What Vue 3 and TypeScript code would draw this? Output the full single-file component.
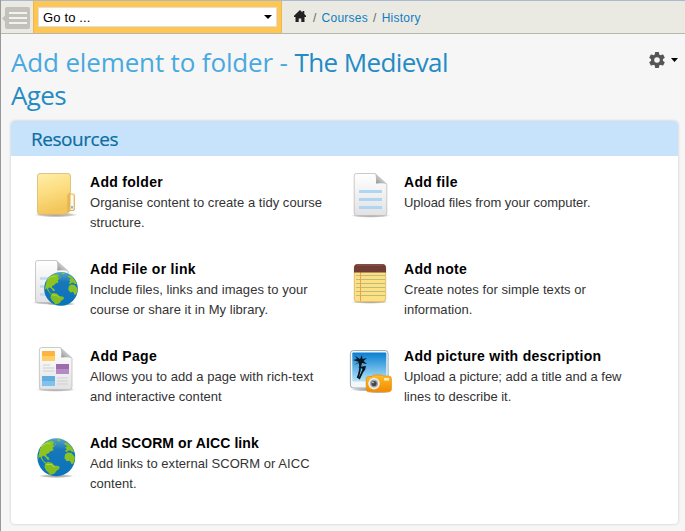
<script setup lang="ts">
interface Resource {
  icon: string
  title: string
  lines: string[]
}

const resources: Resource[] = [
  { icon: 'folder', title: 'Add folder', lines: ['Organise content to create a tidy course', 'structure.'] },
  { icon: 'file', title: 'Add file', lines: ['Upload files from your computer.'] },
  { icon: 'link', title: 'Add File or link', lines: ['Include files, links and images to your', 'course or share it in My library.'] },
  { icon: 'note', title: 'Add note', lines: ['Create notes for simple texts or', 'information.'] },
  { icon: 'page', title: 'Add Page', lines: ['Allows you to add a page with rich-text', 'and interactive content'] },
  { icon: 'picture', title: 'Add picture with description', lines: ['Upload a picture; add a title and a few', 'lines to describe it.'] },
  { icon: 'scorm', title: 'Add SCORM or AICC link', lines: ['Add links to external SCORM or AICC', 'content.'] },
]
</script>

<template>
  <div class="page">
    <!-- Shared gradients and shapes -->
    <svg class="defs" width="0" height="0" aria-hidden="true">
      <defs>
        <linearGradient id="g-folder" x1="0" y1="0" x2="0.25" y2="1">
          <stop offset="0" stop-color="#ffeeaa" />
          <stop offset="0.5" stop-color="#fcdd80" />
          <stop offset="1" stop-color="#f3c55a" />
        </linearGradient>
        <linearGradient id="g-paper" x1="0" y1="0" x2="0" y2="1">
          <stop offset="0" stop-color="#ffffff" />
          <stop offset="1" stop-color="#e2e2e4" />
        </linearGradient>
        <linearGradient id="g-fold" x1="0" y1="1" x2="1" y2="0">
          <stop offset="0" stop-color="#8b8b8b" />
          <stop offset="0.6" stop-color="#d5d5d5" />
          <stop offset="1" stop-color="#b5b5b5" />
        </linearGradient>
        <linearGradient id="g-sea" x1="0" y1="0" x2="0" y2="1">
          <stop offset="0" stop-color="#55a5c9" />
          <stop offset="0.3" stop-color="#1976ba" />
          <stop offset="1" stop-color="#0873bb" />
        </linearGradient>
        <linearGradient id="g-sky" x1="0" y1="0" x2="0" y2="1">
          <stop offset="0" stop-color="#087ed3" />
          <stop offset="1" stop-color="#b4e4f8" />
        </linearGradient>
        <linearGradient id="g-camera" x1="0" y1="0" x2="0" y2="1">
          <stop offset="0" stop-color="#ffbd29" />
          <stop offset="1" stop-color="#f38a00" />
        </linearGradient>
        <radialGradient id="g-shadow">
          <stop offset="0" stop-color="#777" stop-opacity="0.8" />
          <stop offset="0.7" stop-color="#888" stop-opacity="0.45" />
          <stop offset="1" stop-color="#999" stop-opacity="0" />
        </radialGradient>
        <symbol id="sheet" viewBox="0 0 48 48">
          <ellipse cx="23.5" cy="44.5" rx="20" ry="2.3" fill="url(#g-shadow)" />
          <path d="M9.5 2.5H28L39.8 13V42Q39.8 44.5 37.3 44.5H9.5Q7.2 44.5 7.2 42V5Q7.2 2.5 9.5 2.5Z" fill="url(#g-paper)" stroke="#bcbcbc" stroke-width="0.8" />
          <path d="M28 2.3L40 13.2Q36 11.5 29 12.5Q29.5 6 28 2.3Z" fill="url(#g-fold)" />
        </symbol>
        <symbol id="globe" viewBox="0 0 114 114">
          <circle cx="57" cy="57" r="56" fill="url(#g-sea)" />
          <path d="M6 45L9 32Q17 17 31 10L45 8L50 14L47 21L53 23L46 29L49 36L40 39L34 45L27 48L28 54L34 57L37 64L31 64L25 56L18 52L14 57L20 69L27 73L24 76L15 66L9 55L3 61Z" fill="#8cc51f" />
          <path d="M24 76L32 70L45 74L51 81L65 83L67 90L58 97L52 105L38 109L34 102L27 96L22 86Z" fill="#84bd22" />
          <path d="M61 3L70 5L66 10L59 8ZM78 16L87 13L97 21Q107 32 110 42L101 40L98 36L91 38L87 42L83 38L88 33L83 28L90 24ZM83 48L91 43L102 44L108 52L112 56Q112 65 107 76L102 77L97 67L88 69L81 60ZM51 16L57 18L54 21Z" fill="#89c225" />
          <path d="M12 26L20 19L31 15L39 17M27 78L42 78L52 86" fill="none" stroke="#b3d935" stroke-width="3" />
        </symbol>
      </defs>
    </svg>

    <header class="topbar">
      <button class="toggle" aria-label="Menu">
        <svg width="29" height="22" viewBox="0 0 29 22">
          <path d="M5 0H26Q28 0 28 2V20Q28 22 26 22H5Q3 22 3 20V14.5L0 11.5L3 8.5V2Q3 0 5 0Z" fill="#c2c1bc" />
          <path d="M7 6H25M7 11H25M7 16H25" stroke="#f3f2ed" stroke-width="2" />
        </svg>
      </button>
      <div class="goto">
        <div class="select" role="button" tabindex="0">
          <span>Go to ...</span>
          <svg width="8" height="4" viewBox="0 0 8 4"><path d="M0 0H8L4 4Z" /></svg>
        </div>
      </div>
      <nav class="crumbs">
        <svg width="12" height="12" viewBox="0 0 12 12">
          <path d="M6 0L8.5 2.4V1H10.3V4.1L12 5.8V7H10.5V12H7.3V8.5H4.7V12H1.5V7H0V5.8Z" fill="#222" />
        </svg>
        <span class="slash">/</span>
        <a>Courses</a>
        <span class="slash">/</span>
        <a>History</a>
      </nav>
    </header>

    <main>
      <div class="heading">
        <h1>
          Add element to folder - <strong>The Medieval<br />Ages</strong>
        </h1>
        <button class="settings" aria-label="Settings">
          <svg width="16" height="16" viewBox="0 0 16 16">
            <g fill="#555">
              <rect v-for="a in [0, 60, 120]" :key="a" x="5.9" y="0" width="4.2" height="16" rx="0.8" :transform="`rotate(${a} 8 8)`" />
              <circle cx="8" cy="8" r="6" />
            </g>
            <circle cx="8" cy="8" r="2.8" fill="#f6f6f6" />
          </svg>
          <svg width="7" height="4" viewBox="0 0 7 4"><path d="M0 0H7L3.5 4Z" /></svg>
        </button>
      </div>

      <section class="panel">
        <h2>Resources</h2>
        <ul class="grid">
          <li v-for="item in resources" :key="item.title" class="item" :class="`item-${item.icon}`">
            <svg class="icon" width="48" height="48" viewBox="0 0 48 48" aria-hidden="true">
              <template v-if="item.icon === 'folder'">
                <ellipse cx="23" cy="43.8" rx="22" ry="2.5" fill="url(#g-shadow)" />
                <path d="M36 23H39.5Q41.3 23 41.3 25V37.5Q41.3 39.5 39.5 39.5H36" fill="#fffaf0" stroke="#dfb35a" stroke-width="1.2" />
                <path d="M7 2.5H35Q37.5 2.5 37.5 5V21.5L35 23V41L32 43.5H7Q4.5 43.5 4.5 41V5Q4.5 2.5 7 2.5Z" fill="url(#g-folder)" stroke="#d6b875" stroke-width="0.8" />
                <path d="M34.5 24L37.5 21.5V40L34.5 42.5Z" fill="#e6b64f" />
                <path d="M39 35V37.5" stroke="#56a8e0" stroke-width="1.5" />
              </template>

              <template v-else-if="item.icon === 'file'">
                <use href="#sheet" width="48" height="48" />
                <path d="M12 20.5H35M12 28.5H35M12 36.5H35" stroke="#aed5f2" stroke-width="2.8" />
              </template>

              <template v-else-if="item.icon === 'link'">
                <use href="#sheet" x="-4.7" width="48" height="48" />
                <path d="M7 20.5H19M7 28.5H13M7 36.5H13" stroke="#b9dcf4" stroke-width="2.5" />
                <ellipse cx="28" cy="46" rx="15" ry="1.8" fill="url(#g-shadow)" />
                <use href="#globe" x="10.8" y="13.6" width="34.4" height="34.4" />
              </template>

              <template v-else-if="item.icon === 'note'">
                <ellipse cx="23" cy="44" rx="19" ry="1.8" fill="url(#g-shadow)" />
                <rect x="7.3" y="6.5" width="31.4" height="37.3" rx="3" fill="#fde083" stroke="#d7b45a" stroke-width="0.8" />
                <path d="M9 17.5H38M9 21.5H38M9 25.5H38M9 29.5H38M9 33.5H38M9 37.5H38" stroke="#b9bd77" />
                <path d="M13.5 14V43" stroke="#eea052" />
                <path d="M7 14.5V10Q7 6 11 6H35Q39 6 39 10V14.5Z" fill="#713d34" />
                <path d="M10 7H36" stroke="#936055" />
              </template>

              <template v-else-if="item.icon === 'page'">
                <use href="#sheet" x="-0.8" width="48" height="48" />
                <rect x="9" y="6" width="13" height="10" fill="#fcb340" />
                <rect x="9" y="11" width="13" height="5" fill="#ffcf65" />
                <rect x="23" y="19" width="13" height="10" fill="#9d6bae" />
                <rect x="23" y="24" width="13" height="5" fill="#b58ac3" />
                <rect x="9" y="31" width="13" height="10" fill="#62ade0" />
                <rect x="9" y="36" width="13" height="5" fill="#80c2ed" />
                <path d="M10 20H17M10 23H21.5M10 26H21.5M24 33H35M24 36H35M24 39H35" stroke="#cfcfd1" stroke-width="1.2" />
              </template>

              <template v-else-if="item.icon === 'picture'">
                <ellipse cx="23" cy="44.5" rx="20" ry="2" fill="url(#g-shadow)" />
                <rect x="3.4" y="5.5" width="37.7" height="37.5" rx="3" fill="#f4f6f8" stroke="#99adba" />
                <rect x="5.3" y="7.5" width="34" height="29" rx="1" fill="url(#g-sky)" />
                <path d="M12.8 18Q14 25 10.5 33M17 23Q15 28 12 34" fill="none" stroke="#071521" stroke-width="1.8" />
                <path d="M12 17L6 15L10 14L8 11L13 14L15 10L15.5 14L20 13L16.5 16L20 19L15 18L14 22L11.5 18L7 20Z" fill="#071521" />
                <path d="M16 24L11 22L15 21.5L19 21L18 25L15 28Z" fill="#071521" />
                <ellipse cx="32" cy="47" rx="13" ry="1" fill="url(#g-shadow)" />
                <path d="M21.5 31.5H25L26.5 30H35L36.5 31H41.5Q44.4 31 44.4 34V44Q44.4 46.8 41.5 46.8H22Q19.2 46.8 19.2 44V34Q19.2 31.5 21.5 31.5Z" fill="url(#g-camera)" stroke="#e58a0b" stroke-width="0.7" />
                <circle cx="27" cy="38.6" r="5.8" fill="#eceef0" />
                <circle cx="27" cy="38.6" r="4" fill="#a1a7ad" />
                <circle cx="27" cy="38.6" r="2.6" fill="#42484e" />
                <circle cx="26" cy="37.5" r="0.8" fill="#dce7ef" />
                <rect x="37" y="33" width="5" height="2.5" rx="0.5" fill="#fff0bc" />
              </template>

              <template v-else>
                <ellipse cx="23.2" cy="44" rx="18" ry="2" fill="url(#g-shadow)" />
                <use href="#globe" x="4" y="6" width="38.6" height="38.6" />
              </template>
            </svg>
            <div class="text">
              <h3>{{ item.title }}</h3>
              <p v-for="line in item.lines" :key="line">{{ line }}</p>
            </div>
          </li>
        </ul>
      </section>
    </main>
  </div>
</template>

<style>
body {
  margin: 0;
  background: #f6f6f6;
}
</style>

<style scoped>
.page {
  box-sizing: border-box;
  height: 531px;
  overflow: hidden;
  border-left: 1px solid #999;
  background: #f6f6f6;
  font-family: "Liberation Sans", Arial, sans-serif;
  font-size: 13px;
  color: #333;
}

.defs {
  position: absolute;
}

button {
  padding: 0;
  border: 0;
  background: none;
}

/* Top bar */
.topbar {
  display: flex;
  box-sizing: border-box;
  height: 34px;
  border-top: 1px solid #a9bad0;
  border-bottom: 1px solid #b7b7ae;
  background: #ebeae2;
}

.toggle {
  display: flex;
  width: 32px;
  padding: 6px 0 0 1px;
}

.goto {
  box-sizing: border-box;
  width: 249px;
  padding: 6px 4px 5px;
  border: solid #e9b84e;
  border-width: 0 1px;
  background: #ffc751;
}

.select {
  display: flex;
  align-items: center;
  justify-content: space-between;
  box-sizing: border-box;
  height: 20px;
  padding: 0 4px;
  border: 1px solid #dce0e3;
  background: #fff;
  color: #000;
  letter-spacing: 0.15px;
}

.crumbs {
  display: flex;
  align-items: center;
  padding: 1px 0 0 12px;
  font-size: 12px;
  letter-spacing: 0.25px;
}

.crumbs svg {
  margin: -3px 7px 0 0;
}

.crumbs a {
  color: #0f7dc2;
}

.slash {
  margin-right: 5px;
  color: #666;
}

.crumbs a + .slash {
  margin-left: 5px;
}

/* Title */
main {
  padding: 0 7px 0 10px;
}

.heading {
  display: flex;
  justify-content: space-between;
  height: 87px;
}

h1 {
  margin: 12px 0 0;
  font: 400 26px/33px "Open Sans", sans-serif;
  letter-spacing: -0.15px;
  color: #48a9de;
}

h1 strong {
  font-weight: 400;
  letter-spacing: -0.6px;
  color: #248bc4;
}

.settings {
  display: flex;
  align-items: center;
  gap: 6px;
  height: 16px;
  margin-top: 18px;
}

/* Resources */
.panel {
  height: 403px;
  border-radius: 4px;
  background: #fff;
  box-shadow: 0 0 3px rgba(0, 0, 0, 0.2);
}

h2 {
  height: 35px;
  margin: 0;
  padding-left: 20px;
  border-radius: 4px 4px 0 0;
  background: #c7e3fb;
  font: 400 19px/36px "Open Sans", sans-serif;
  letter-spacing: -0.45px;
  color: #0b6da2;
  -webkit-text-stroke: 0.2px #0b6da2;
}

.grid {
  display: grid;
  grid-template-columns: 314px 314px;
  row-gap: 27px;
  margin: 0;
  padding: 16px 0 0 22px;
  list-style: none;
}

.item {
  display: flex;
  gap: 9px;
  height: 60px;
}

.icon {
  flex: none;
  margin-top: -1px;
}

.text {
  white-space: nowrap;
}

h3 {
  margin: 0 0 1px;
  font-size: 14px;
  line-height: 20px;
  color: #000;
  letter-spacing: 0.3px;
}

.item-scorm h3 {
  letter-spacing: 0.1px;
}

p {
  margin: 0;
  line-height: 20px;
  letter-spacing: 0.04px;
}

.item-file p,
.item-picture p {
  letter-spacing: -0.02px;
}
</style>
